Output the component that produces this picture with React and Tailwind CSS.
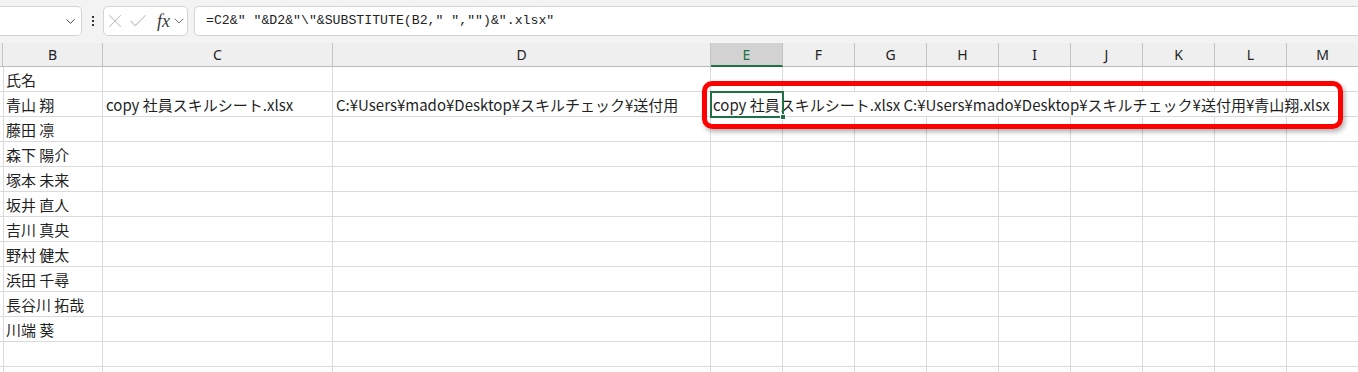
import { Check, ChevronDown, X } from "lucide-react";

const grid = "grid grid-cols-[3px_100px_230px_378px_repeat(9,72px)]";

const names = [
  "藤田 凛",
  "森下 陽介",
  "塚本 未来",
  "坂井 直人",
  "吉川 真央",
  "野村 健太",
  "浜田 千尋",
  "長谷川 拓哉",
  "川端 葵",
  "",
  "",
];

const letters = ["B", "C", "D", "E", "F", "G", "H", "I", "J", "K", "L", "M"];

function Cell({ children, className = "" }) {
  return (
    <div className={`border-r border-[#dadada] pl-[3px] pt-[1px] leading-[24px] whitespace-nowrap overflow-hidden ${className}`}>
      {children}
    </div>
  );
}

function Row({ first }) {
  return (
    <div className={`${grid} h-[25px] border-b border-[#dadada]`}>
      <Cell />
      <Cell>{first}</Cell>
      <Cell />
      <Cell />
      {letters.slice(3).map((l) => (
        <Cell key={l} />
      ))}
    </div>
  );
}

export default function App() {
  return (
    <div className="w-[1358px] h-[372px] overflow-hidden bg-white relative text-[#1f1f1f] font-['Noto_Sans_CJK_JP','Noto_Sans',sans-serif]">
      {/* formula bar */}
      <div className="h-[43px] bg-[#f3f3f3] flex items-start pt-[6px]">
        <div className="w-[82px] h-[30px] bg-white border border-l-0 border-[#d4d4d4] rounded-r-[5px] flex items-center justify-end pr-[3px]">
          <ChevronDown size={15} strokeWidth={1.6} className="text-[#444]" />
        </div>
        <div className="w-[21px] h-[30px] flex flex-col items-center justify-center gap-[2px]">
          <div className="w-[2px] h-[2px] bg-[#333]" />
          <div className="w-[2px] h-[2px] bg-[#333]" />
          <div className="w-[2px] h-[2px] bg-[#333]" />
        </div>
        <div className="w-[85px] h-[30px] bg-white border border-[#d4d4d4] rounded-[5px] flex items-center">
          <X size={22} strokeWidth={1.1} className="text-[#bdbdbd]" />
          <Check size={22} strokeWidth={1.1} className="ml-[1px] text-[#bdbdbd]" />
          <span className="ml-[8px] text-[18px] italic text-[#3a3a3a] font-['Liberation_Serif',serif] leading-none">fx</span>
          <ChevronDown size={16} strokeWidth={1.4} className="ml-[1px] text-[#666]" />
        </div>
        <div className="ml-[6px] flex-1 h-[30px] bg-white border border-r-0 border-[#d4d4d4] rounded-l-[5px] flex items-center pl-[11px] text-[13.2px] text-[#222] font-['Liberation_Mono',monospace] whitespace-pre">
          {'=C2&" "&D2&"\\"&SUBSTITUTE(B2," ","")&".xlsx"'}
        </div>
      </div>

      {/* column headers */}
      <div className={`${grid} h-[24px] bg-[#efefef] border-b border-[#bababa] text-[14px] font-['Noto_Sans',sans-serif] text-[#222]`}>
        <div className="border-r border-[#c4c4c4]" />
        {letters.map((l) =>
          l === "E" ? (
            <div key={l} className="bg-[#d2d2d2] border-r border-[#c4c4c4] border-b-2 border-b-[#1e7145] -mb-[1px] flex items-center justify-center text-[#1e7145]">
              {l}
            </div>
          ) : (
            <div key={l} className="border-r border-[#c4c4c4] flex items-center justify-center">
              {l}
            </div>
          )
        )}
      </div>

      {/* rows */}
      <div className="text-[15px]">
        <Row first="氏名" />
        <div className={`${grid} h-[25px] border-b border-[#dadada]`}>
          <Cell />
          <Cell>青山 翔</Cell>
          <Cell>copy 社員スキルシート.xlsx</Cell>
          <Cell>C:¥Users¥mado¥Desktop¥スキルチェック¥送付用</Cell>
          <div className="col-span-9 relative pl-[2px] pt-[1px] leading-[24px] whitespace-nowrap">
            copy 社員スキルシート.xlsx C:¥Users¥mado¥Desktop¥スキルチェック¥送付用¥青山翔.xlsx
            <div className="absolute -left-[1px] -top-[1px] w-[74px] h-[27px] border-2 border-[#1e7145]" />
            <div className="absolute left-[69px] top-[22px] w-[6px] h-[6px] bg-[#1e7145] border border-white" />
          </div>
        </div>
        {names.map((n, i) => (
          <Row key={i} first={n} />
        ))}
      </div>

      {/* annotation */}
      <div className="absolute left-[702px] top-[81px] w-[641px] h-[48px] border-[5px] border-[#ff0000] rounded-[10px] shadow-[2px_3px_5px_rgba(0,0,0,0.3)]" />
    </div>
  );
}
